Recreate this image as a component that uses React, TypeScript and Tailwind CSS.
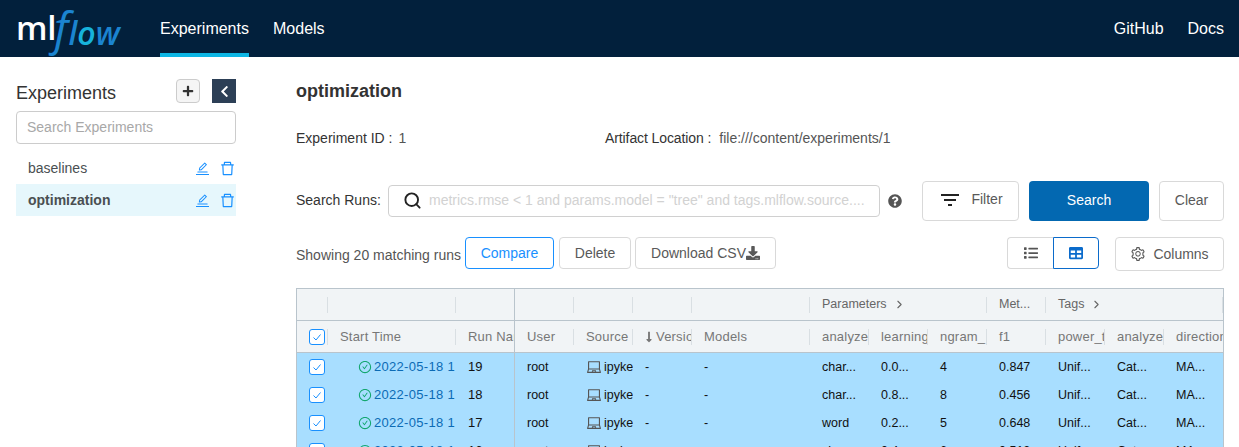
import { AiOutlineCheckCircle, AiOutlineDelete, AiOutlineEdit, AiOutlineLaptop, AiOutlineSetting } from "react-icons/ai"
import { FaChevronLeft, FaDownload, FaList, FaLongArrowAltDown, FaPlus, FaQuestionCircle, FaTable } from "react-icons/fa"
import { MdFilterList } from "react-icons/md"
import { ChevronRight, Search } from "lucide-react"

const gridCols = "grid grid-cols-[31px_128px_59px_59px_59px_59px_118px_59px_59px_59px_59px_59px_59px_59px]"

const columns = ["User", "Source", "Version", "Models", "analyzer", "learning", "ngram_", "f1", "power_t", "analyzer", "direction"]

const runs = [
  { name: "19", analyzer: "char...", rate: "0.0...", ngram: "4", f1: "0.847" },
  { name: "18", analyzer: "char...", rate: "0.8...", ngram: "8", f1: "0.456" },
  { name: "17", analyzer: "word", rate: "0.2...", ngram: "5", f1: "0.648" },
  { name: "16", analyzer: "char...", rate: "0.4...", ngram: "6", f1: "0.512" },
]

function Checkbox() {
  return (
    <span className="flex h-4 w-4 items-center justify-center rounded-[3px] border border-[#1890ff] bg-white">
      <svg viewBox="0 0 12 12" className="h-3 w-3 text-[#1890ff]" fill="none" stroke="currentColor" strokeWidth="1">
        <path d="M2.5 6.5 L5 9 L9.5 3.5" />
      </svg>
    </span>
  )
}

function HeaderCell({ children, line = true, className = "" }: { children?: React.ReactNode; line?: boolean; className?: string }) {
  return (
    <div className={`flex h-full min-w-0 items-center justify-between ${className}`}>
      <div className="flex min-w-0 flex-1 items-center overflow-hidden whitespace-nowrap pl-3">{children}</div>
      {line && <span className="h-4 w-px shrink-0 bg-[#d9dfe3]" />}
    </div>
  )
}

function Logo() {
  return (
    <div className="flex h-full w-[160px] items-center pb-[3px] pl-4 [font-family:'Open_Sans',sans-serif]">
      <span className="text-[33px] leading-none font-semibold tracking-[-0.3px] text-white">ml</span>
      <span className="-ml-[2px] flex items-baseline font-semibold text-[#1b84d0] italic">
        <span className="text-[46px] leading-none font-medium">f</span>
        <span className="text-[32px] leading-none">l</span>
        <span className="text-[32px] leading-none text-[#17b3dc]">o</span>
        <span className="text-[32px] leading-none">w</span>
      </span>
    </div>
  )
}

function ExperimentItem({ name, active }: { name: string; active?: boolean }) {
  return (
    <div className={`flex h-8 items-center justify-between pl-3 text-[14px] text-[#4a4f52] ${active ? "bg-[#e6f7fc] font-bold" : ""}`}>
      <span>{name}</span>
      <div className="flex items-center gap-[10px] text-[#1890ff]">
        <span className="border-b border-[#1890ff] leading-none">
          <AiOutlineEdit className="h-[13px] w-[13px]" />
        </span>
        <AiOutlineDelete className="h-[17px] w-[17px]" />
      </div>
    </div>
  )
}

function OutlineButton({ children, className = "" }: { children: React.ReactNode; className?: string }) {
  return (
    <button type="button" className={`flex items-center justify-center rounded-[4px] border bg-white text-[14px] ${className}`}>
      {children}
    </button>
  )
}

const plain = "border-[#d9d9d9] text-[#595959]"

export default function App() {
  return (
    <div className="h-[447px] w-[1239px] overflow-hidden bg-white text-[14px] text-[#333] [font-family:'Liberation_Sans',Arial,sans-serif]">
      <header className="flex h-[57px] items-stretch justify-between bg-[#02203c] text-[16px] text-white">
        <div className="flex items-stretch">
          <Logo />
          <div className="flex w-[89px] items-center justify-center border-b-4 border-[#0db6e4] pt-1">Experiments</div>
          <div className="ml-6 flex items-center">Models</div>
        </div>
        <div className="flex items-center gap-6 pr-[15px]">
          <span>GitHub</span>
          <span>Docs</span>
        </div>
      </header>

      <div className="flex">
        <aside className="ml-4 w-[220px] shrink-0 pt-[22px]">
          <div className="flex h-6 items-center justify-between">
            <span className="pt-1 text-[18px] text-[#333]">Experiments</span>
            <div className="flex items-center gap-3">
              <button type="button" className="flex h-6 w-6 items-center justify-center rounded-[4px] border border-[#ccc] bg-[#f5f5f5] text-[#333]">
                <FaPlus className="h-3 w-3" />
              </button>
              <button type="button" className="flex h-6 w-6 items-center justify-center bg-[#2c3f56] text-white">
                <FaChevronLeft className="h-[13px] w-[13px]" />
              </button>
            </div>
          </div>
          <div className="mt-2 flex h-[33px] items-center rounded-[4px] border border-[#ccc] px-[10px] text-[14px] text-[#a8a8a8]">Search Experiments</div>
          <div className="mt-2">
            <ExperimentItem name="baselines" />
            <ExperimentItem name="optimization" active />
          </div>
        </aside>

        <main className="ml-[60px] min-w-0 flex-1 pt-6 pr-[15px]">
          <h1 className="text-[18px] leading-5 font-bold text-[#333]">optimization</h1>

          <div className="mt-[29px] flex h-4 items-center text-[14px]">
            <div className="flex w-[309px] items-center">
              <span>Experiment ID :</span>
              <span className="ml-[6px] text-[#555]">1</span>
            </div>
            <span className="tracking-[-0.1px]">Artifact Location :</span>
            <span className="ml-2 text-[#555]">file:///content/experiments/1</span>
          </div>

          <div className="mt-[34px] flex h-[41px] items-center">
            <span className="w-[92px] shrink-0">Search Runs:</span>
            <div className="flex h-8 w-[492px] items-center rounded-[4px] border border-[#d0d0d0] pl-[14px]">
              <Search className="h-[19px] w-[19px] text-[#222]" strokeWidth={2.4} />
              <span className="ml-[7px] truncate text-[#d2d2d2]">metrics.rmse &lt; 1 and params.model = "tree" and tags.mlflow.source....</span>
            </div>
            <FaQuestionCircle className="ml-2 h-[14px] w-[14px] text-[#555]" />
            <OutlineButton className={`ml-5 h-10 w-[97px] gap-[9px] pb-[2px] ${plain}`}>
              <MdFilterList className="h-6 w-6 text-[#222]" />
              Filter
            </OutlineButton>
            <button type="button" className="ml-[10px] h-10 w-[120px] rounded-[4px] bg-[#0368b1] text-white">Search</button>
            <OutlineButton className={`ml-[10px] h-10 w-[65px] ${plain}`}>Clear</OutlineButton>
          </div>

          <div className="mt-4 flex h-[34px] items-start">
            <span className="mt-2 w-[169px] shrink-0 text-[#555]">Showing 20 matching runs</span>
            <OutlineButton className="h-8 w-[89px] border-[#1890ff] text-[#1890ff]">Compare</OutlineButton>
            <OutlineButton className={`ml-[5px] h-8 w-[72px] ${plain}`}>Delete</OutlineButton>
            <OutlineButton className={`ml-1 h-8 w-[141px] ${plain}`}>
              Download CSV
              <FaDownload className="h-[14px] w-[14px]" />
            </OutlineButton>
            <div className="ml-auto flex items-start">
              <OutlineButton className={`h-8 w-[46px] rounded-r-none border-r-0 ${plain}`}>
                <FaList className="h-[14px] w-[14px] text-[#555]" />
              </OutlineButton>
              <OutlineButton className="h-8 w-[46px] rounded-l-none border-[#0b6bcb]">
                <FaTable className="h-[14px] w-[14px] text-[#0b6bcb]" />
              </OutlineButton>
              <OutlineButton className={`ml-4 h-[34px] w-[109px] gap-[7px] ${plain}`}>
                <AiOutlineSetting className="h-4 w-4" />
                Columns
              </OutlineButton>
            </div>
          </div>

          <section className="mt-[17px] w-[928px] border border-[#b9c4cc] text-[12.5px]">
            <div className={`${gridCols} h-[32px] border-b border-[#b9c4cc] bg-[#f1f4f6] text-[#666]`}>
              <HeaderCell />
              <HeaderCell />
              <HeaderCell line={false} className="border-r border-[#b9c4cc]" />
              <HeaderCell />
              <HeaderCell />
              <HeaderCell />
              <HeaderCell />
              <HeaderCell className="col-span-3">
                Parameters
                <ChevronRight className="ml-[6px] h-[13px] w-[13px]" />
              </HeaderCell>
              <HeaderCell>Met...</HeaderCell>
              <HeaderCell className="col-span-3">
                Tags
                <ChevronRight className="ml-[6px] h-[13px] w-[13px]" />
              </HeaderCell>
            </div>

            <div className={`${gridCols} h-[32px] border-b border-[#b9c4cc] bg-[#f1f4f6] text-[13px] tracking-[0.2px] text-[#777]`}>
              <div className="flex h-full items-center justify-between pl-3">
                <Checkbox />
                <span className="h-4 w-px bg-[#d9dfe3]" />
              </div>
              <HeaderCell>Start Time</HeaderCell>
              <HeaderCell line={false} className="border-r border-[#b9c4cc]">Run Name</HeaderCell>
              {columns.map((col, i) => (
                <HeaderCell key={`${col}-${i}`} line={i !== columns.length - 1}>
                  {col === "Version" && <FaLongArrowAltDown className="mr-[3px] h-3 w-[8px] shrink-0" />}
                  {col}
                </HeaderCell>
              ))}
            </div>

            <div className="h-[94px] overflow-hidden bg-[#a8deff] text-[#111]">
              {runs.map((run) => (
                <div key={run.name} className={`${gridCols} h-[28px] items-center`}>
                  <div className="flex h-full items-center pl-3">
                    <Checkbox />
                  </div>
                  <div className="flex h-full items-center overflow-hidden whitespace-nowrap pl-[30px] text-[13px] tracking-[0.3px] text-[#0b6bb5]">
                    <AiOutlineCheckCircle className="mr-[2px] h-[14px] w-[14px] shrink-0 text-[#12a66e]" />
                    2022-05-18 1
                  </div>
                  <div className="flex h-full items-center border-r border-[#b9c4cc] pl-3 text-[13px]">{run.name}</div>
                  <div className="pl-3">root</div>
                  <div className="flex items-center overflow-hidden whitespace-nowrap pl-3">
                    <AiOutlineLaptop className="mr-[2px] h-4 w-4 shrink-0 text-[#555]" />
                    ipyke
                  </div>
                  <div className="pl-3">-</div>
                  <div className="pl-3">-</div>
                  <div className="pl-3">{run.analyzer}</div>
                  <div className="pl-3">{run.rate}</div>
                  <div className="pl-3">{run.ngram}</div>
                  <div className="pl-3">{run.f1}</div>
                  <div className="pl-3">Unif...</div>
                  <div className="pl-3">Cat...</div>
                  <div className="pl-3">MA...</div>
                </div>
              ))}
            </div>
          </section>
        </main>
      </div>
    </div>
  )
}
